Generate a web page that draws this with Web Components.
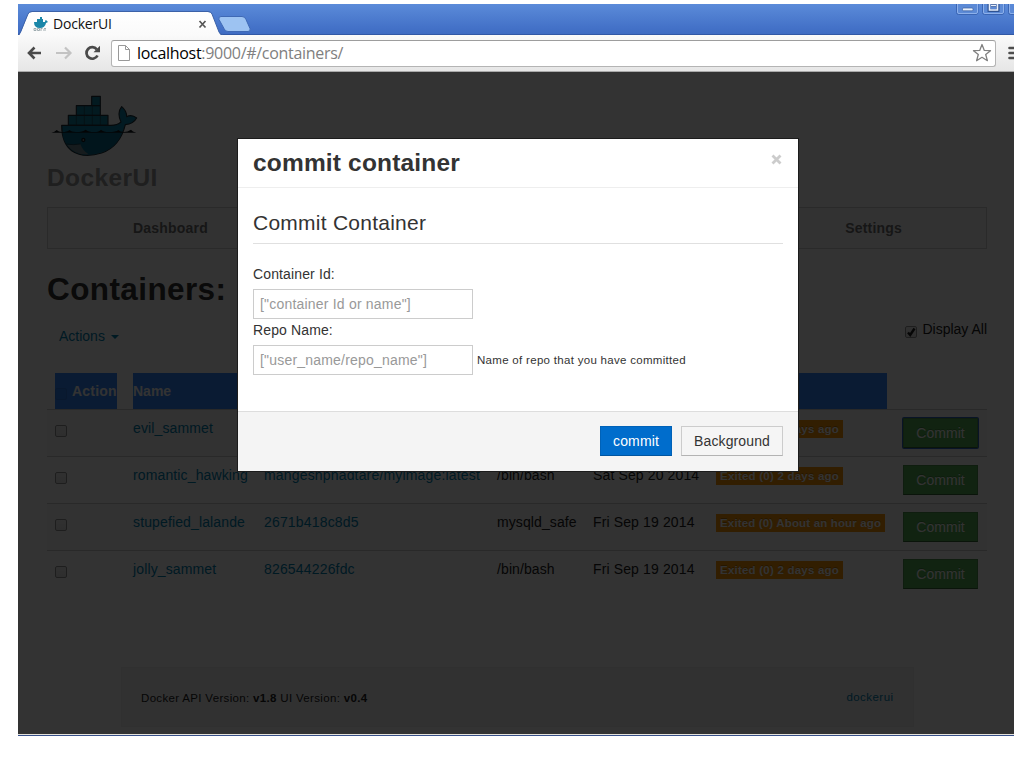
<!DOCTYPE html>
<html lang="en">
<head>
<meta charset="utf-8">
<title>DockerUI</title>
<style>
  html, body { margin: 0; height: 100%; background: #fff; overflow: hidden; }
  body { font: 14px/20px "Liberation Sans", Arial, sans-serif; color: #333; }
</style>
</head>
<body>
<browser-window>
  <containers-page></containers-page>
  <commit-dialog></commit-dialog>
</browser-window>

<script>
const define = (name, html, setup) => customElements.define(name, class extends HTMLElement {
  constructor() {
    super();
    this.attachShadow({ mode: 'open' }).innerHTML = typeof html === 'function' ? '' : html;
  }
  connectedCallback() {
    if (typeof html === 'function') this.shadowRoot.innerHTML = html(this);
    if (setup) setup(this);
  }
});

const whaleShape = `
  <g stroke="#22313a" stroke-width="3.500" stroke-linejoin="round">
    <path fill="#10809f" d="M185 49h26v28h-26zM139 77h72v29h-72zM115 106h119v30H115z"/>
    <path fill="none" stroke-width="1.500" d="M163 77v59M187 77v59M139 106v30M211 106v30M139 106h72M186 77h25"/>
    <path fill="#0d83a8" d="M95 136H243Q262 136 273 126Q260 98 275 80Q290 92 290 110Q305 102 320 114Q310 132 286 134Q270 200 215 219Q160 236 125 212Q95 190 95 136Z"/>
    <path fill="#07698c" stroke="none" d="M97 158H276Q258 205 213 217Q160 234 127 211Q100 190 97 158Z"/>
    <path fill="#6d878f" stroke="none" d="M111 194Q130 197 151 192Q158 212 176 223Q134 226 111 194Z"/>
    <path fill="none" stroke-width="2" d="M109 192Q130 196 151 192"/>
  </g>
  <path fill="#10181c" d="M64 158q10-2 16-8q6 6 16 6q16 0 22-6q6 6 20 6q20 0 29-7q8 7 26 7q14 0 20-7q7 7 24 7q20 0 28-6q6 6 16 6q12 0 22-7q4 6 16 9z"/>
  <circle cx="160" cy="180" r="6.500" fill="#10181c"/><circle cx="160" cy="180" r="2.500" fill="#bbb"/>`;

define('docker-whale', `
  <style>:host{display:block} svg{display:block}</style>
  <svg width="88" height="62" viewBox="60 45 264 186">${whaleShape}</svg>`);

define('browser-window', `
  <style>
    :host { display: flex; flex-direction: column; box-sizing: border-box; width: 996px; height: 732px; margin: 4px 0 0 18px; position: relative; overflow: hidden; }
    .strip { height: 31px; flex: none; background: linear-gradient(#5b8bd9, #4472c8 75%, #3e6bc2); box-shadow: inset 0 -1px #3158a5; display: flex; justify-content: space-between; }
    .strip svg { display: block; }
    .tabbox { position: relative; width: 240px; height: 32px; z-index: 1; }
    .tab { position: absolute; inset: 0; display: flex; align-items: center; padding: 8px 0 0 15px; box-sizing: border-box; color: #111; font: 14px/20px "Open Sans", "Noto Sans", sans-serif; }
    .tab svg { flex: none; }
    .tab span { margin-left: 5px; letter-spacing: -.2px; }
    .tab .x { margin-left: 86px; }
    .win { flex: none; }
    .bar { height: 37px; flex: none; box-sizing: border-box; background: linear-gradient(#fafafa, #e6e6e6); border-bottom: 1px solid #aaa; display: flex; align-items: center; padding: 0 0 0 8px; overflow: hidden; }
    .bar svg { flex: none; display: block; }
    .omni { flex: none; display: flex; align-items: center; box-sizing: border-box; width: 885px; height: 27px; margin-left: 9px; padding-left: 6px; background: #fff; border: 1px solid #b4b4b4; border-top-color: #9d9d9d; border-radius: 3px; font: 16px/24px "Open Sans", "Noto Sans", sans-serif; color: #808080; }
    .omni .url { flex: 1; margin: 0 0 1px 7px; letter-spacing: -.3px; }
    .omni b { font-weight: 400; color: #000; }
    .view { flex: 1; position: relative; overflow: hidden; background: #fff; }
    .edge { height: 2px; flex: none; background: linear-gradient(#e4e2dc 50%, #37508a 50%); }
  </style>
  <div class="strip">
    <div class="tabbox">
      <svg width="240" height="32">
        <defs><linearGradient id="t" x2="0" y2="1"><stop offset="0" stop-color="#fff"/><stop offset="1" stop-color="#fafafa"/></linearGradient></defs>
        <path d="M203 12.500h21q3 0 4 3l4 9q1 3-2 3h-20q-3 0-4-3l-5-9q-1-3 2-3z" fill="#9dc3f2" stroke="#3f69b5"/>
        <path d="M0 32Q2 31 3 28L10 10Q11 8 14 8H190Q193 8 194 10L201 28Q202 31 205 32Z" fill="url(#t)"/>
        <path d="M0 30Q2 30 3 27L10 10Q11 7.500 14 7.500H190Q193 7.500 194 10L201 28Q202 31 205 30.500" fill="none" stroke="#3c62a8"/>
      </svg>
      <div class="tab">
        <svg width="15" height="16" viewBox="0 0 15 16"><path d="M4 3h3V1h2v2h1v3h2q0-2 1-2l2 2-2 1q-1 5-6 5Q1 12 1 6h3z" fill="#1a86a8"/><path d="M1 12.500h2v2h-2zM4.500 12.500h2v2h-2zM8 12.500h1.500M8 12v3M10 14h3M11 12.500h2" fill="none" stroke="#8a9aa0" stroke-width=".8"/></svg>
        <span>DockerUI</span>
        <svg class="x" width="9" height="9"><path d="M1.500 1l6 6.500M7.500 1l-6 6.500" stroke="#555" stroke-width="1.700"/></svg>
      </div>
    </div>
    <svg class="win" width="58" height="12">
      <g fill="#5c8ad6" stroke="#3a65b4"><path d="M.5-3V8.500q0 2 2 2H20q2 0 2-2V-3M26.500-3V8.500q0 2 2 2H46q2 0 2-2V-3M52.500-3V8.500q0 2 2 2H60"/></g>
      <g fill="none" stroke="#8db0ea"><path d="M1.500-3V8Q1.500 9.500 3 9.500H20q1.500 0 1.500-1.500V-3M27.500-3V8q0 1.500 1.500 1.500H46q1.500 0 1.500-1.500V-3M53.500-3V8q0 1.500 1.500 1.500H60"/></g>
      <rect x="6.500" y="4" width="10.500" height="2.800" rx="1" fill="#e8effa" stroke="#3a5f9f" stroke-width=".7"/>
      <path d="M33-2V6.500H42V-2M35 1.500H40" fill="none" stroke="#2e5292" stroke-width="3"/><path d="M33.500-2V6H41.500V-2M35 1.500H40" fill="none" stroke="#e8effa" stroke-width="1.600"/>
    </svg>
  </div>
  <div class="bar">
    <svg width="76" height="20" viewBox="0 0 76 20">
      <path d="M15 10H3M8.500 4.500L3 10l5.500 5.500" fill="none" stroke="#4a4a4a" stroke-width="2.600"/>
      <path d="M30 10H44M39 4.500L44.500 10 39 15.500" fill="none" stroke="#c3c3c3" stroke-width="2.200"/>
      <path d="M71.500 12.500A5.800 5.800 0 1 1 70.800 6.300" fill="none" stroke="#4a4a4a" stroke-width="2.700"/><path d="M74 2.800V9.300H67.500z" fill="#4a4a4a"/>
    </svg>
    <div class="omni">
      <svg width="12" height="16"><path d="M.5.5H7.500L11.500 4.500V15.500H.5zM7.500.5V4.500H11.500" fill="#fff" stroke="#999"/></svg>
      <span class="url"><b>localhost</b>:9000/#/containers/</span>
      <svg width="20" height="20" viewBox="0 0 20 20" style="margin-right:3px"><path d="M10 1.500L12.300 7.400 18.500 7.700 13.700 11.500 15.400 17.700 10 14.300 4.600 17.700 6.300 11.500 1.500 7.700 7.700 7.400z" fill="#fff" stroke="#808080" stroke-width="1.300" stroke-linejoin="round"/></svg>
    </div>
    <svg width="18" height="14" style="margin-left:11px"><path d="M2.500 2H16M2.500 7H16M2.500 12H16" stroke="#4d4d4d" stroke-width="2.600" stroke-linecap="round"/></svg>
  </div>
  <div class="view"><slot></slot></div>
  <div class="edge"></div>`);

define('check-box', el => `
  <style>
    :host { display: block; box-sizing: border-box; width: 12px; height: 12px; border: 1px solid ${el.getAttribute('edge') || '#959595'}; border-radius: 2px; background: ${el.getAttribute('fill') || 'linear-gradient(#f2f2f2,#e4e4e4)'}; flex: none; }
    svg { display: block; overflow: visible; }
  </style>
  ${el.hasAttribute('checked') ? '<svg width="10" height="10"><path d="M2 5.500L4.200 8 8.500 1.500" fill="none" stroke="#222" stroke-width="2.400"/></svg>' : ''}`);

define('commit-button', el => `
  <style>
    :host { display: block; box-sizing: border-box; width: 75px; height: 30px; border: 1px solid #4b934b; border-bottom-color: #356635; background: #57b157; color: #fff; text-align: center; line-height: 28px; letter-spacing: .05px; text-shadow: 0 -1px rgba(0,0,0,.25); }
    :host([focused]) { box-shadow: 0 0 0 1px #2f63c0; border-radius: 1px; }
  </style><slot></slot>`);

define('container-row', el => {
  const a = n => el.getAttribute(n) || '';
  return `
  <style>
    :host { display: grid; grid-template-columns: 78px 131px 233px 96px 123px 187px 76px; box-sizing: border-box; height: 47px; padding: 8px 0 0 8px; border-top: 1px solid #ccc; color: #222; white-space: nowrap; }
    :host([odd]) { background: #f7f7f7; }
    .link { color: #0080b0; letter-spacing: .13px; }
    check-box { margin-top: 7px; }
    .label { justify-self: start; align-self: start; margin-top: 2px; height: 18px; padding: 0 4px; background: #f89406; color: #fff; font: bold 11.500px/18px "Liberation Sans", Arial, sans-serif; letter-spacing: ${a('ls') || '.22px'}; text-shadow: 0 -1px rgba(0,0,0,.25); }
  </style>
  <check-box></check-box>
  <span class="link">${a('name')}</span>
  <span class="link" style="letter-spacing:.17px">${a('image')}</span>
  <span style="letter-spacing:.1px">${a('command')}</span>
  <span style="letter-spacing:.13px">${a('created')}</span>
  <span class="label">${a('status')}</span>
  <commit-button ${el.hasAttribute('focused') ? 'focused' : ''}>Commit</commit-button>`;
});

define('containers-page', `
  <style>
    :host { display: block; height: 661px; box-sizing: border-box; padding: 23px 27px 0 29px; background: #fff; }
    docker-whale { margin-left: 3px; }
    h3 { margin: 6px 0 0; font-size: 24.500px; line-height: 30px; color: #999; letter-spacing: .4px; }
    nav { box-sizing: border-box; display: flex; justify-content: space-between; height: 42px; margin-top: 14px; padding: 0 84px 0 85px; border: 1px solid #d0d0d0; background: #fbfbfb; color: #707070; font-weight: 700; line-height: 40px; letter-spacing: .2px; }
    h2 { margin: 20px 0 0; font-size: 31.500px; line-height: 40px; color: #333; letter-spacing: .4px; }
    .tools { display: flex; justify-content: space-between; height: 64px; }
    .menu { display: flex; align-items: center; gap: 6px; height: 20px; margin: 17px 0 0 12px; color: #0080b0; }
    .menu i { border: 4px solid transparent; border-top-color: #0080b0; border-bottom: 0; margin-top: 2px; }
    .all { display: flex; gap: 5px; height: 20px; margin-top: 10px; color: #222; }
    .all check-box { margin-top: 7px; }
    .head { display: flex; gap: 16px; height: 36px; padding-left: 8px; color: #fff; font-weight: 700; line-height: 36px; }
    .head div { background: #3287ff; }
    .act { width: 62px; display: flex; align-items: center; gap: 5px; letter-spacing: .2px; }
    .act check-box { margin-top: 6px; }
    .name { width: 754px; }
    footer { display: flex; justify-content: space-between; box-sizing: border-box; width: 793px; height: 60px; margin: 70px 0 0 74px; padding: 0 20px 0 19px; border: 1px solid #eee; background: #f5f5f5; font-size: 11.500px; letter-spacing: .33px; line-height: 60px; color: #222; }
    footer a { color: #0080b0; line-height: 58px; letter-spacing: .45px; margin-right: -.5px; }
  </style>
  <docker-whale></docker-whale>
  <h3>DockerUI</h3>
  <nav><span>Dashboard</span><span>Settings</span></nav>
  <h2>Containers:</h2>
  <div class="tools">
    <div class="menu">Actions<i></i></div>
    <div class="all"><check-box checked></check-box><span>Display All</span></div>
  </div>
  <div class="head">
    <div class="act"><check-box edge="#2f78e0" fill="#2f80f2"></check-box>Action</div>
    <div class="name">Name</div>
  </div>
  <container-row odd focused name="evil_sammet" status="Exited (0) 2 days ago"></container-row>
  <container-row name="romantic_hawking" image="mangeshphadtare/myimage:latest" command="/bin/bash" created="Sat Sep 20 2014" status="Exited (0) 2 days ago"></container-row>
  <container-row odd name="stupefied_lalande" image="2671b418c8d5" command="mysqld_safe" created="Fri Sep 19 2014" ls=".16px" status="Exited (0) About an hour ago"></container-row>
  <container-row name="jolly_sammet" image="826544226fdc" command="/bin/bash" created="Fri Sep 19 2014" status="Exited (0) 2 days ago"></container-row>
  <footer><span>Docker API Version: <b>v1.8</b> UI Version: <b>v0.4</b></span><a>dockerui</a></footer>`);

define('commit-dialog', `
  <style>
    :host { position: absolute; inset: 0; background: rgba(0,0,0,.8); }
    .modal { position: absolute; left: 219px; top: 66px; width: 560px; border: 1px solid #1c1c1c; background: #fff; }
    header { display: flex; justify-content: space-between; height: 48px; padding: 0 16px 0 15px; border-bottom: 1px solid #eee; }
    h3 { margin: 9px 0 0; font-size: 24.500px; line-height: 30px; letter-spacing: .17px; }
    header svg { margin-top: 15px; }
    .body { height: 223px; padding: 0 15px; overflow: hidden; }
    legend { padding: 0; height: 55px; line-height: 70px; font-size: 21px; letter-spacing: .25px; border-bottom: 1px solid #e0e0e0; margin-bottom: 20px; width: 530px; }
    label { display: block; height: 20px; margin-bottom: 5px; letter-spacing: .13px; }
    .line { display: flex; align-items: center; gap: 4px; height: 30px; margin-bottom: 1px; font-size: 11.500px; letter-spacing: .3px; white-space: nowrap; }
    .field { box-sizing: border-box; width: 220px; height: 30px; border: 1px solid #ccc; padding-left: 6px; font-size: 14px; line-height: 28px; color: #999; letter-spacing: .2px; }
    footer { display: flex; justify-content: flex-end; gap: 9px; height: 60px; box-sizing: border-box; padding: 14px 15px 0; background: #f4f4f4; border-top: 1px solid #ddd; }
    .btn { box-sizing: border-box; width: 102px; height: 30px; text-align: center; line-height: 28px; letter-spacing: .12px; border: 1px solid #ccc; border-bottom-color: #b3b3b3; background: #f5f5f5; }
    .primary { width: 72px; background: #006dcc; border-color: #0062b8; border-bottom-color: #0055a0; color: #fff; }
  </style>
  <div class="modal">
    <header><h3>commit container</h3><svg width="11" height="11"><path d="M1.500 1.500l8 8M9.500 1.500l-8 8" stroke="#ccc" stroke-width="2.800"/></svg></header>
    <div class="body">
      <legend>Commit Container</legend>
      <label>Container Id:</label>
      <div class="line"><div class="field">["container Id or name"]</div></div>
      <label>Repo Name:</label>
      <div class="line"><div class="field">["user_name/repo_name"]</div><span>Name of repo that you have committed</span></div>
    </div>
    <footer><div class="btn primary">commit</div><div class="btn">Background</div></footer>
  </div>`);
</script>
</body>
</html>
